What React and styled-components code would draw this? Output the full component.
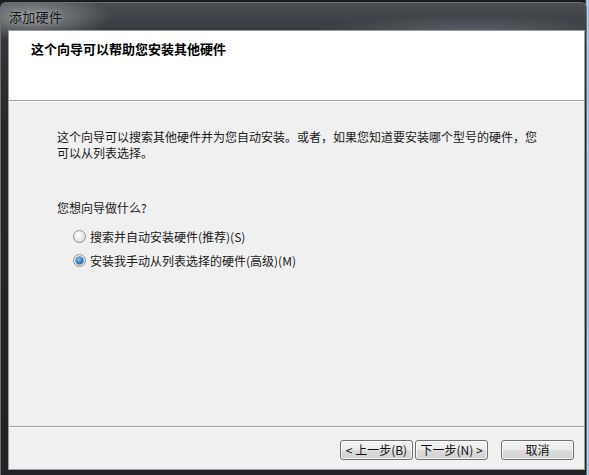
import React, { useState } from "react";
import styled, { createGlobalStyle } from "styled-components";

const GlobalStyle = createGlobalStyle`
  html, body {
    margin: 0;
    padding: 0;
    background: #16181a;
  }
  body {
    font-family: "Noto Sans CJK SC", "Liberation Sans", sans-serif;
    font-size: 12px;
    color: #111;
  }
`;

const options = [
  { id: "auto", label: "搜索并自动安装硬件(推荐)(S)" },
  { id: "manual", label: "安装我手动从列表选择的硬件(高级)(M)" },
];

const App = () => {
  const [choice, setChoice] = useState("manual");

  return (
    <>
      <GlobalStyle />
      <Desktop>
        <Window>
          <TitleBar>
            <Caption>添加硬件</Caption>
          </TitleBar>
          <Client>
            <Header>
              <HeaderTitle>这个向导可以帮助您安装其他硬件</HeaderTitle>
            </Header>
            <Body>
              <Intro>
                这个向导可以搜索其他硬件并为您自动安装。或者，如果您知道要安装哪个型号的硬件，您可以从列表选择。
              </Intro>
              <Question>您想向导做什么?</Question>
              <RadioList>
                {options.map((opt) => (
                  <RadioRow key={opt.id} onClick={() => setChoice(opt.id)}>
                    <RadioDot checked={choice === opt.id} />
                    <span>{opt.label}</span>
                  </RadioRow>
                ))}
              </RadioList>
            </Body>
            <Footer>
              <ButtonPair>
                <WizardButton>&lt; 上一步(B)</WizardButton>
                <WizardButton>下一步(N) &gt;</WizardButton>
              </ButtonPair>
              <WizardButton>取消</WizardButton>
            </Footer>
          </Client>
        </Window>
      </Desktop>
    </>
  );
};

export default App;

const Desktop = styled.div`
  width: 589px;
  height: 475px;
  overflow: hidden;
  display: flex;
  align-items: flex-start;
  background: linear-gradient(to right, #1a1c1e 0, #1a1c1e 585px, #c9dff0 587px, #7fb3dc 589px);
`;

const Window = styled.div`
  width: 587px;
  height: 473px;
  box-sizing: border-box;
  margin-top: 2px;
  display: flex;
  flex-direction: column;
  padding: 0 1px 5px 7px;
  border: 1px solid #6c7073;
  border-bottom: none;
  border-radius: 6px 6px 0 0;
  background:
    radial-gradient(ellipse 80px 24px at 30px 14px, rgba(175, 177, 179, 0.7), rgba(175, 177, 179, 0) 100%),
    radial-gradient(ellipse 160px 18px at 470px 30px, rgba(140, 150, 160, 0.45), rgba(140, 150, 160, 0) 100%),
    linear-gradient(to bottom, #4b4f53 0, #34383c 30px, #25282b 120px, #202225 100%);
`;

const TitleBar = styled.div`
  height: 27px;
  display: flex;
  align-items: center;
  padding-left: 1px;
`;

const Caption = styled.span`
  font-size: 13px;
  color: #151515;
  letter-spacing: 0.3px;
  text-shadow: 0 0 5px rgba(210, 210, 210, 0.7);
`;

const Client = styled.div`
  flex: 1;
  display: flex;
  flex-direction: column;
  background: #f0f0f0;
  border: 1px solid #9a9c9e;
`;

const Header = styled.div`
  height: 70px;
  background: #fff;
  border-bottom: 1px solid #a0a0a0;
  box-shadow: 0 1px 0 #fff;
  padding: 10px 0 0 22px;
  box-sizing: border-box;
`;

const HeaderTitle = styled.div`
  font-size: 13px;
  font-weight: bold;
  line-height: 16px;
  color: #000;
`;

const Body = styled.div`
  flex: 1;
  display: flex;
  flex-direction: column;
  padding: 28px 0 0 48px;
`;

const Intro = styled.p`
  margin: 0;
  width: 486px;
  line-height: 16px;
  color: #1a1a1a;
`;

const Question = styled.div`
  margin-top: 39px;
  line-height: 16px;
  color: #1a1a1a;
`;

const RadioList = styled.div`
  margin-top: 8px;
  padding-left: 16px;
  display: flex;
  flex-direction: column;
`;

const RadioRow = styled.label`
  height: 24px;
  display: flex;
  align-items: center;
  gap: 4px;
  color: #1a1a1a;
  cursor: default;
`;

const RadioDot = styled.span`
  width: 13px;
  height: 13px;
  box-sizing: border-box;
  border-radius: 50%;
  border: 1px solid #8f9091;
  background: radial-gradient(circle at 40% 35%, #ffffff 0, #ececec 45%, #d2d2d2 100%);
  display: flex;
  align-items: center;
  justify-content: center;

  &::after {
    content: "";
    display: ${({ checked }) => (checked ? "block" : "none")};
    width: 7px;
    height: 7px;
    border-radius: 50%;
    background: radial-gradient(circle at 40% 35%, #8ccaf5 0, #2f7cc6 55%, #173f73 100%);
    box-shadow: 0 0 0 0.5px #1f446b;
  }
`;

const Footer = styled.div`
  height: 43px;
  box-sizing: border-box;
  border-top: 1px solid #a0a0a0;
  box-shadow: inset 0 1px 0 #fff;
  display: flex;
  justify-content: flex-end;
  align-items: flex-start;
  gap: 13px;
  padding: 13px 10px 0 0;
`;

const ButtonPair = styled.div`
  display: flex;
  gap: 2px;
`;

const WizardButton = styled.button`
  width: 73px;
  height: 20px;
  padding: 0;
  font-family: "Noto Sans CJK SC", "Liberation Sans", sans-serif;
  font-size: 12px;
  line-height: 18px;
  color: #111;
  border: 1px solid #707070;
  border-radius: 3px;
  background: linear-gradient(to bottom, #f2f2f2 0, #ebebeb 50%, #dddddd 51%, #cfcfcf 100%);
  box-shadow: inset 0 0 0 1px rgba(255, 255, 255, 0.7);
`;
